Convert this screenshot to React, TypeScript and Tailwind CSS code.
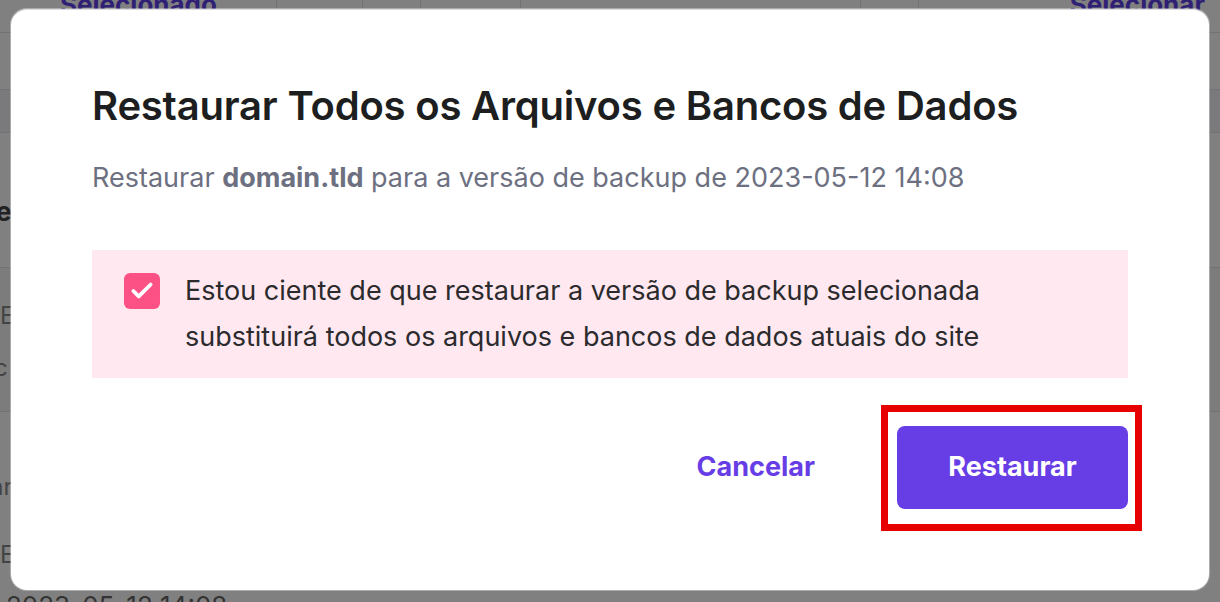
import { Check } from 'lucide-react';

function BackdropPage() {
  // what is left visible of the backups table behind the dimmed overlay
  return (
    <div className="flex h-full w-full flex-col text-[#3a3a3a]">
      <div className="flex h-[33px] shrink-0 items-start border-b border-[#727272]">
        <div className="flex h-full w-[276px] items-start pl-[60px]">
          <span className="-mt-[15px] text-[26px] font-bold text-[#2f1f75]">Selecionado</span>
        </div>
        <div className="h-full w-[86px] border-l border-[#727272]" />
        <div className="h-full w-[58px] border-l border-[#727272]" />
        <div className="h-full w-[100px] border-l border-[#727272]" />
        <div className="h-full w-[340px] border-l border-[#727272]" />
        <div className="h-full w-[58px] border-l border-[#727272]" />
        <div className="flex h-full flex-1 justify-end border-l border-[#727272] pr-[15px]">
          <span className="-mt-[15px] text-[26px] font-bold text-[#2f1f75]">Selecionar</span>
        </div>
      </div>
      <div className="h-[57px] shrink-0 border-b border-[#727272]" />
      <div className="h-[43px] shrink-0 border-b border-[#727272] bg-[#7a7a7c]" />
      <div className="flex h-[135px] shrink-0 items-end border-b border-[#727272] pb-[40px]">
        <span className="-ml-[4px] text-[26px] font-bold leading-[30px] text-[#222]">ec</span>
      </div>
      <div className="flex h-[144px] shrink-0 flex-col border-b border-[#727272] bg-[#7c7c7d] pt-[33px]">
        <span className="text-[24px] leading-[29px] text-[#444]">E</span>
        <span className="-ml-[6px] mt-[23px] text-[24px] leading-[29px] text-[#444]">c</span>
      </div>
      <div className="flex shrink-0 flex-col pt-[60px]">
        <span className="-ml-[10px] text-[24px] leading-[29px] text-[#444]">ar</span>
        <span className="mt-[39px] text-[24px] leading-[29px] text-[#444]">E</span>
        <span className="mt-[22px] pl-[6px] text-[26px] leading-[30px] text-[#333]">2023-05-12 14:08</span>
      </div>
    </div>
  );
}

export default function App() {
  return (
    <div
      className="relative h-[602px] w-[1220px] overflow-hidden bg-[#808080]"
      style={{ fontFamily: 'Inter, "Noto Sans", sans-serif' }}
    >
      <BackdropPage />

      <div className="absolute inset-0 pb-[12px] pl-[11px] pr-[11px] pt-[9px]">
        <div className="flex h-full flex-col rounded-[16px] border-t border-[#dcdcdc] bg-white px-[81px] pt-[72px] shadow-[0_0_0_1px_rgba(255,255,255,0.35)]">
          <h2 className="text-[40px] font-semibold leading-[48px] tracking-[-0.2px] text-[#1d1e20]">
            Restaurar Todos os Arquivos e Bancos de Dados
          </h2>
          <p className="mt-[32px] text-[27px] leading-[32px] text-[#6d7081]">
            Restaurar <span className="font-bold">domain.tld</span> para a versão de backup de 2023-05-12 14:08
          </p>

          <div className="mt-[56px] flex items-start gap-[25px] bg-[#ffe8ef] py-[18px] pl-[32px] pr-[24px]">
            <span className="mt-[5px] flex h-[36px] w-[36px] shrink-0 items-center justify-center rounded-[6px] bg-[#fc5185]">
              <Check className="h-[26px] w-[26px] text-white" strokeWidth={3.5} />
            </span>
            <p className="text-[27px] leading-[46px] text-[#2b2b2e]">
              Estou ciente de que restaurar a versão de backup selecionada
              <br />
              substituirá todos os arquivos e bancos de dados atuais do site
            </p>
          </div>

          <div className="mt-[48px] flex items-center justify-end">
            <button className="mr-[82px] text-[27px] font-bold text-[#673de6]">Cancelar</button>
            <button className="relative h-[83px] w-[231px] rounded-[8px] bg-[#673de6] text-[27px] font-bold text-white">
              Restaurar
              <span className="pointer-events-none absolute -bottom-[22px] -left-[16px] -right-[14px] -top-[21px] border-[7px] border-[#e60000]" />
            </button>
          </div>
        </div>
      </div>
    </div>
  );
}
